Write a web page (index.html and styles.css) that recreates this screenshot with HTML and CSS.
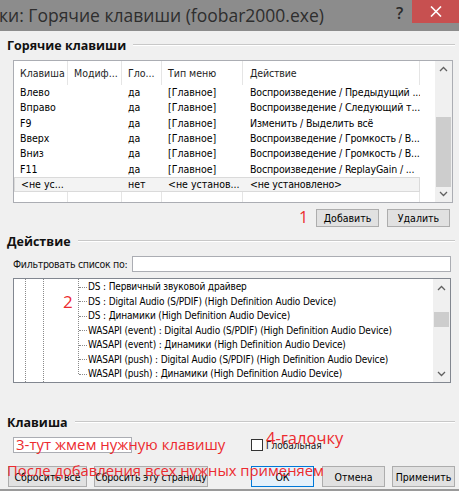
FILE: index.html
```html
<!DOCTYPE html>
<html lang="ru">
<head>
<meta charset="utf-8">
<link rel="stylesheet" href="styles.css">
</head>
<body>
<div class="window">
  <div class="titlebar">
    <span class="title">ки: Горячие клавиши (foobar2000.exe)</span>
    <span class="help">?</span>
    <span class="close"><svg width="12" height="11" viewBox="0 0 12 11"><path d="M1 0.5 L11 10.5 M11 0.5 L1 10.5" stroke="#fff" stroke-width="1.6"/></svg></span>
  </div>

  <div class="client">
    <div class="group-head first"><span>Горячие клавиши</span><i class="rule"></i></div>

    <div class="listview">
      <div class="lv-grid">
        <div class="lv-row lv-header"><span>Клавиша</span><span>Модиф...</span><span>Гло...</span><span>Тип меню</span><span>Действие</span><span></span></div>
        <div class="lv-row"><span>Влево</span><span></span><span>да</span><span>[Главное]</span><span>Воспроизведение / Предыдущий ...</span><span></span></div>
        <div class="lv-row"><span>Вправо</span><span></span><span>да</span><span>[Главное]</span><span>Воспроизведение / Следующий т...</span><span></span></div>
        <div class="lv-row"><span>F9</span><span></span><span>да</span><span>[Главное]</span><span>Изменить / Выделить всё</span><span></span></div>
        <div class="lv-row"><span>Вверх</span><span></span><span>да</span><span>[Главное]</span><span>Воспроизведение / Громкость / В...</span><span></span></div>
        <div class="lv-row"><span>Вниз</span><span></span><span>да</span><span>[Главное]</span><span>Воспроизведение / Громкость / В...</span><span></span></div>
        <div class="lv-row"><span>F11</span><span></span><span>да</span><span>[Главное]</span><span>Воспроизведение / ReplayGain / ...</span><span></span></div>
        <div class="lv-row selected"><span>&lt;не ус...</span><span></span><span>нет</span><span>&lt;не установ...</span><span>&lt;не установлено&gt;</span><span class="nosel"></span></div>
        <div class="lv-row lv-filler"><span></span><span></span><span></span><span></span><span></span><span></span></div>
      </div>
      <div class="vscroll">
        <span class="arrow"><svg width="9" height="6" viewBox="0 0 9 6"><path d="M1 5 L4.5 1.5 L8 5" fill="none" stroke="#606060" stroke-width="1.3"/></svg></span>
        <span class="track lv-track"><i class="thumb"></i></span>
        <span class="arrow"><svg width="9" height="6" viewBox="0 0 9 6"><path d="M1 1 L4.5 4.5 L8 1" fill="none" stroke="#606060" stroke-width="1.3"/></svg></span>
      </div>
    </div>

    <div class="btn-row top">
      <button class="btn small">Добавить</button>
      <button class="btn small">Удалить</button>
    </div>

    <div class="group-head second"><span>Действие</span><i class="rule"></i></div>

    <div class="filter-row">
      <label class="filter-label">Фильтровать список по:</label>
      <span class="edit filter-edit"></span>
    </div>

    <div class="tree">
      <div class="tree-list">
        <div class="tree-item"><i class="conn"></i>DS : Первичный звуковой драйвер</div>
        <div class="tree-item"><i class="conn"></i>DS : Digital Audio (S/PDIF) (High Definition Audio Device)</div>
        <div class="tree-item"><i class="conn"></i>DS : Динамики (High Definition Audio Device)</div>
        <div class="tree-item"><i class="conn"></i>WASAPI (event) : Digital Audio (S/PDIF) (High Definition Audio Device)</div>
        <div class="tree-item"><i class="conn"></i>WASAPI (event) : Динамики (High Definition Audio Device)</div>
        <div class="tree-item"><i class="conn"></i>WASAPI (push) : Digital Audio (S/PDIF) (High Definition Audio Device)</div>
        <div class="tree-item"><i class="conn"></i>WASAPI (push) : Динамики (High Definition Audio Device)</div>
      </div>
      <div class="vscroll">
        <span class="arrow"><svg width="9" height="6" viewBox="0 0 9 6"><path d="M1 5 L4.5 1.5 L8 5" fill="none" stroke="#606060" stroke-width="1.3"/></svg></span>
        <span class="track tree-track"><i class="thumb"></i></span>
        <span class="arrow"><svg width="9" height="6" viewBox="0 0 9 6"><path d="M1 1 L4.5 4.5 L8 1" fill="none" stroke="#606060" stroke-width="1.3"/></svg></span>
      </div>
    </div>

    <div class="group-head third"><span>Клавиша</span><i class="rule"></i></div>

    <div class="key-row">
      <span class="edit key-edit"></span>
      <span class="check"></span>
      <span class="check-label">Глобальная</span>
    </div>

    <div class="btn-row bottom">
      <button class="btn">Сбросить всё</button>
      <button class="btn wide">Сбросить эту страницу</button>
      <span class="spacer"></span>
      <button class="btn default">ОК</button>
      <button class="btn">Отмена</button>
      <button class="btn">Применить</button>
    </div>
  </div>

  <span class="note n1">1</span>
  <span class="note n2">2</span>
  <span class="note n3">3-тут жмем нужную клавишу</span>
  <span class="note n4">4-галочку</span>
  <span class="note n5">После добавления всех нужных применяем</span>
</div>
</body>
</html>
```
FILE: styles.css
```css
* { box-sizing: border-box; }
html, body { margin: 0; padding: 0; }
body {
  width: 459px;
  height: 491px;
  overflow: hidden;
  background: #f0f0f0;
  font-family: "DejaVu Sans Condensed", "DejaVu Sans", sans-serif;
  font-size: 10.5px;
  color: #000;
}
.window {
  position: relative;
  width: 459px;
  height: 491px;
  background: #f0f0f0;
  border-bottom: 2px solid #9a9a9a;
}
.titlebar {
  height: 31px;
  background: #8c8c8c;
  display: flex;
  align-items: flex-start;
}
.title {
  font-family: "Open Sans", sans-serif;
  font-size: 17.5px;
  line-height: 30px;
  color: #2e2e2e;
  margin-left: -1px;
  white-space: nowrap;
}
.help {
  font-family: "Open Sans", sans-serif;
  font-size: 16px;
  font-weight: 600;
  color: #2a2a2a;
  margin-left: auto;
  line-height: 26px;
  width: 16px;
}
.close {
  width: 47px;
  height: 23px;
  background: #c75050;
  display: flex;
  align-items: center;
  justify-content: center;
}

.client { padding: 0; }

.group-head {
  display: flex;
  align-items: center;
  height: 16px;
  margin: 0 4px 0 7px;
  font-family: "Open Sans", sans-serif;
  font-weight: 700;
  font-size: 12.5px;
  color: #111;
}
.group-head.first { margin-top: 6px; }
.group-head.second { margin-top: 6px; }
.group-head.third { margin-top: 31px; }
.group-head .rule {
  flex: 1;
  height: 2px;
  margin-left: 7px;
  border-top: 1px solid #c8c8c8;
  border-bottom: 1px solid #ffffff;
}

.listview {
  margin: 7px 0 0 13px;
  width: 440px;
  height: 143px;
  border: 1px solid #abadb3;
  background: #fff;
  display: flex;
}
.lv-grid { flex: 1; display: flex; flex-direction: column; }
.lv-row {
  display: grid;
  grid-template-columns: 54px 54px 40px 81px 177px 1fr;
  height: 15.33px;
  line-height: 15.33px;
  white-space: nowrap;
}
.lv-row span { overflow: hidden; padding-left: 6px; }
.lv-row span:nth-child(5) { padding-left: 7px; letter-spacing: -0.15px; }
.lv-header { height: 24px; line-height: 25px; color: #1e1e1e; }
.lv-header span:not(:last-child),
.lv-filler span:not(:last-child) { border-right: 1px solid #e5e5e5; }
.lv-row.selected span:not(.nosel) {
  background: #f3f3f3;
  border-top: 1px solid #dadada;
  border-bottom: 1px solid #dadada;
  line-height: 13.33px;
}
.lv-row.selected span:first-child { border-left: 1px solid #dadada; }
.lv-row.selected span:nth-child(5) { border-right: 1px solid #dadada; }
.lv-filler { flex: 1; height: auto; }

.vscroll {
  width: 17px;
  background: #f0f0f0;
  display: flex;
  flex-direction: column;
  align-items: center;
}
.vscroll .arrow {
  height: 17px;
  width: 17px;
  display: flex;
  align-items: center;
  justify-content: center;
}
.vscroll .track { flex: 1; width: 15px; display: flex; flex-direction: column; }
.thumb { display: block; background: #cdcdcd; }
.lv-track .thumb { margin-top: 40px; height: 70px; }
.tree-track .thumb { margin-top: 16px; height: 15px; }

.btn-row { display: flex; }
.btn-row.top {
  margin-top: 6px;
  justify-content: flex-end;
  padding-right: 9px;
  gap: 8px;
}
.btn {
  font-family: "DejaVu Sans Condensed", "DejaVu Sans", sans-serif;
  font-size: 10.5px;
  color: #000;
  background: #e1e1e1;
  border: 1px solid #adadad;
  padding: 0;
  margin: 0;
  height: 21px;
  width: 63px;
  white-space: nowrap;
}
.btn.small { height: 18px; }
.btn-row.bottom {
  margin-top: 13px;
  padding-left: 8px;
  gap: 7px;
  padding-right: 4px;
}
.btn-row.bottom .btn:first-child { width: 79px; }
.btn.wide { width: 114px; letter-spacing: -0.2px; }
.btn-row.bottom .spacer { flex: 1; }
.btn.default { border-color: #0078d7; background: #e5f1fb; margin-right: 1px; }

.filter-row {
  display: flex;
  align-items: center;
  height: 16px;
  margin-top: 7px;
}
.filter-label {
  padding-left: 13px;
  width: 132px;
  flex: none;
  color: #111;
  white-space: nowrap;
  letter-spacing: -0.3px;
}
.edit {
  display: block;
  background: #fff;
  border: 1px solid #abadb3;
  height: 16px;
}
.filter-edit { width: 319px; }

.tree {
  margin: 6px 0 0 13px;
  width: 438px;
  height: 105px;
  border: 1px solid #828790;
  background: #fff;
  display: flex;
}
.tree-list {
  flex: 1;
  padding-top: 1px;
  background-image:
    repeating-linear-gradient(to bottom, #8a8a8a 0 1px, transparent 1px 2px),
    repeating-linear-gradient(to bottom, #8a8a8a 0 1px, transparent 1px 2px),
    repeating-linear-gradient(to bottom, #8a8a8a 0 1px, transparent 1px 2px);
  background-size: 1px 100%, 1px 100%, 1px 95px;
  background-position: 11px 0, 29px 0, 64px 0;
  background-repeat: no-repeat;
}
.tree-item {
  height: 14.5px;
  line-height: 14.5px;
  display: flex;
  align-items: center;
  padding-left: 65px;
  white-space: nowrap;
  color: #000;
  font-size: 10px;
  letter-spacing: -0.15px;
}
.tree-item .conn {
  display: block;
  width: 8px;
  height: 0;
  border-top: 1px dotted #8a8a8a;
  margin-right: 1px;
}

.key-row {
  display: flex;
  align-items: center;
  height: 16px;
  margin-top: 7px;
}
.key-edit { margin-left: 13px; width: 119px; }
.check {
  width: 12px;
  height: 12px;
  border: 1px solid #333;
  background: #fff;
  margin-left: 119px;
}
.check-label { margin-left: 3px; font-size: 10px; color: #111; }

.note {
  position: absolute;
  font-family: "Open Sans", sans-serif;
  color: #ec2b2f;
  white-space: nowrap;
  line-height: 1;
}
.n1 { left: 299px; top: 209px; font-size: 16px; }
.n2 { left: 63px; top: 293px; font-size: 17px; }
.n3 { left: 16px; top: 437px; font-size: 15px; }
.n4 { left: 266px; top: 430px; font-size: 16.5px; }
.n5 { left: 7px; top: 463px; font-size: 14.8px; }
```
